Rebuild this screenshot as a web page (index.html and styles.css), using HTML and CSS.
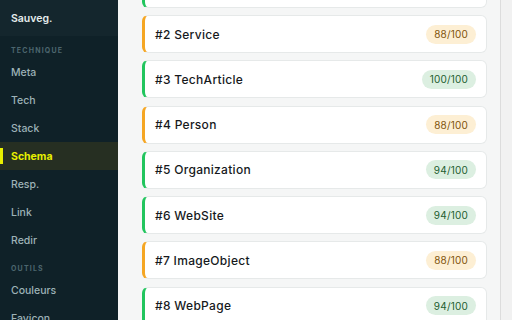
FILE: index.html
```html
<!DOCTYPE html>
<html lang="fr">
  <head>
    <meta charset="UTF-8" />
    <meta name="viewport" content="width=device-width, initial-scale=1.0" />
    <title>Schema</title>
    <link rel="stylesheet" href="styles.css">
  </head>
  <body>
    <div class="app">
      <!--==================== SIDEBAR ====================-->
      <aside class="sidebar">
        <div class="sidebar__top">Sauveg.</div>

        <div class="sidebar__label">Technique</div>
        <a href="#" class="sidebar__link">Meta</a>
        <a href="#" class="sidebar__link">Tech</a>
        <a href="#" class="sidebar__link">Stack</a>
        <a href="#" class="sidebar__link sidebar__link--active">Schema</a>
        <a href="#" class="sidebar__link">Resp.</a>
        <a href="#" class="sidebar__link">Link</a>
        <a href="#" class="sidebar__link">Redir</a>

        <div class="sidebar__label">Outils</div>
        <a href="#" class="sidebar__link">Couleurs</a>
        <a href="#" class="sidebar__link">Favicon</a>
      </aside>

      <!--==================== MAIN ====================-->
      <main class="main">
        <div class="schema-list">
          <div class="schema schema--good"></div>
          <div class="schema schema--warn">
            <span class="schema__name">#2 Service</span>
            <span class="score score--warn">88/100</span>
          </div>
          <div class="schema schema--good">
            <span class="schema__name">#3 TechArticle</span>
            <span class="score score--good">100/100</span>
          </div>
          <div class="schema schema--warn">
            <span class="schema__name">#4 Person</span>
            <span class="score score--warn">88/100</span>
          </div>
          <div class="schema schema--good">
            <span class="schema__name">#5 Organization</span>
            <span class="score score--good">94/100</span>
          </div>
          <div class="schema schema--good">
            <span class="schema__name">#6 WebSite</span>
            <span class="score score--good">94/100</span>
          </div>
          <div class="schema schema--warn">
            <span class="schema__name">#7 ImageObject</span>
            <span class="score score--warn">88/100</span>
          </div>
          <div class="schema schema--good">
            <span class="schema__name">#8 WebPage</span>
            <span class="score score--good">94/100</span>
          </div>
        </div>
      </main>

      <div class="scrollbar"></div>
    </div>
  </body>
</html>
```

FILE: styles.css
```css
* {
  box-sizing: border-box;
}
body {
  margin: 0;
  padding: 0;
  font-family: Inter, "Noto Sans", sans-serif;
  overflow: hidden;
}
.app {
  display: flex;
  width: 512px;
  height: 320px;
  overflow: hidden;
}

/* sidebar */
.sidebar {
  width: 118px;
  flex-shrink: 0;
  background-color: #0f2128;
  display: flex;
  flex-direction: column;
}
.sidebar > * {
  flex-shrink: 0;
}
.sidebar__top {
  height: 36px;
  display: flex;
  align-items: center;
  padding-left: 11px;
  background-color: #14262d;
  color: #e4ecec;
  font-size: 10.5px;
  font-weight: 600;
}
.sidebar__label {
  height: 22px;
  padding: 11px 0 0 11px;
  font-size: 7px;
  line-height: 8px;
  font-weight: 700;
  letter-spacing: 1.2px;
  text-transform: uppercase;
  color: #4c666e;
}
.sidebar__link {
  position: relative;
  height: 28px;
  display: flex;
  align-items: center;
  padding-left: 11px;
  font-size: 10.5px;
  font-weight: 500;
  color: #9db2b7;
  text-decoration: none;
}
.sidebar__link--active {
  background-color: #262f22;
  color: #e8f000;
  font-weight: 700;
}
.sidebar__link--active::before {
  content: "";
  position: absolute;
  left: 0;
  top: 6px;
  width: 3px;
  height: 16px;
  background-color: #e8f000;
}

/* main */
.main {
  flex: 1;
  background-color: #f5f6f6;
  padding: 0 13px 0 24px;
}
.schema-list {
  display: flex;
  flex-direction: column;
  gap: 7.3px;
  margin-top: -30.3px;
}
.schema {
  height: 38px;
  flex-shrink: 0;
  display: flex;
  align-items: center;
  justify-content: space-between;
  padding: 0 10px 0 10px;
  background-color: #ffffff;
  border: 1px solid #e6e9e9;
  border-left: 3px solid;
  border-radius: 6px;
}
.schema--good {
  border-left-color: #22c55e;
}
.schema--warn {
  border-left-color: #f5a623;
}
.schema__name {
  font-size: 12px;
  font-weight: 500;
  letter-spacing: 0.3px;
  color: #16191c;
}
.score {
  height: 19px;
  padding: 0 8px;
  display: flex;
  align-items: center;
  border-radius: 10px;
  font-size: 10px;
  font-weight: 400;
  letter-spacing: 0.2px;
}
.score--good {
  background-color: #dcefe1;
  color: #1d5e30;
}
.score--warn {
  background-color: #fdefd4;
  color: #80530a;
}

/* fake scrollbar */
.scrollbar {
  width: 12px;
  flex-shrink: 0;
  background-color: #f1f1f1;
  border-left: 1px solid #dcdcdc;
}
```
